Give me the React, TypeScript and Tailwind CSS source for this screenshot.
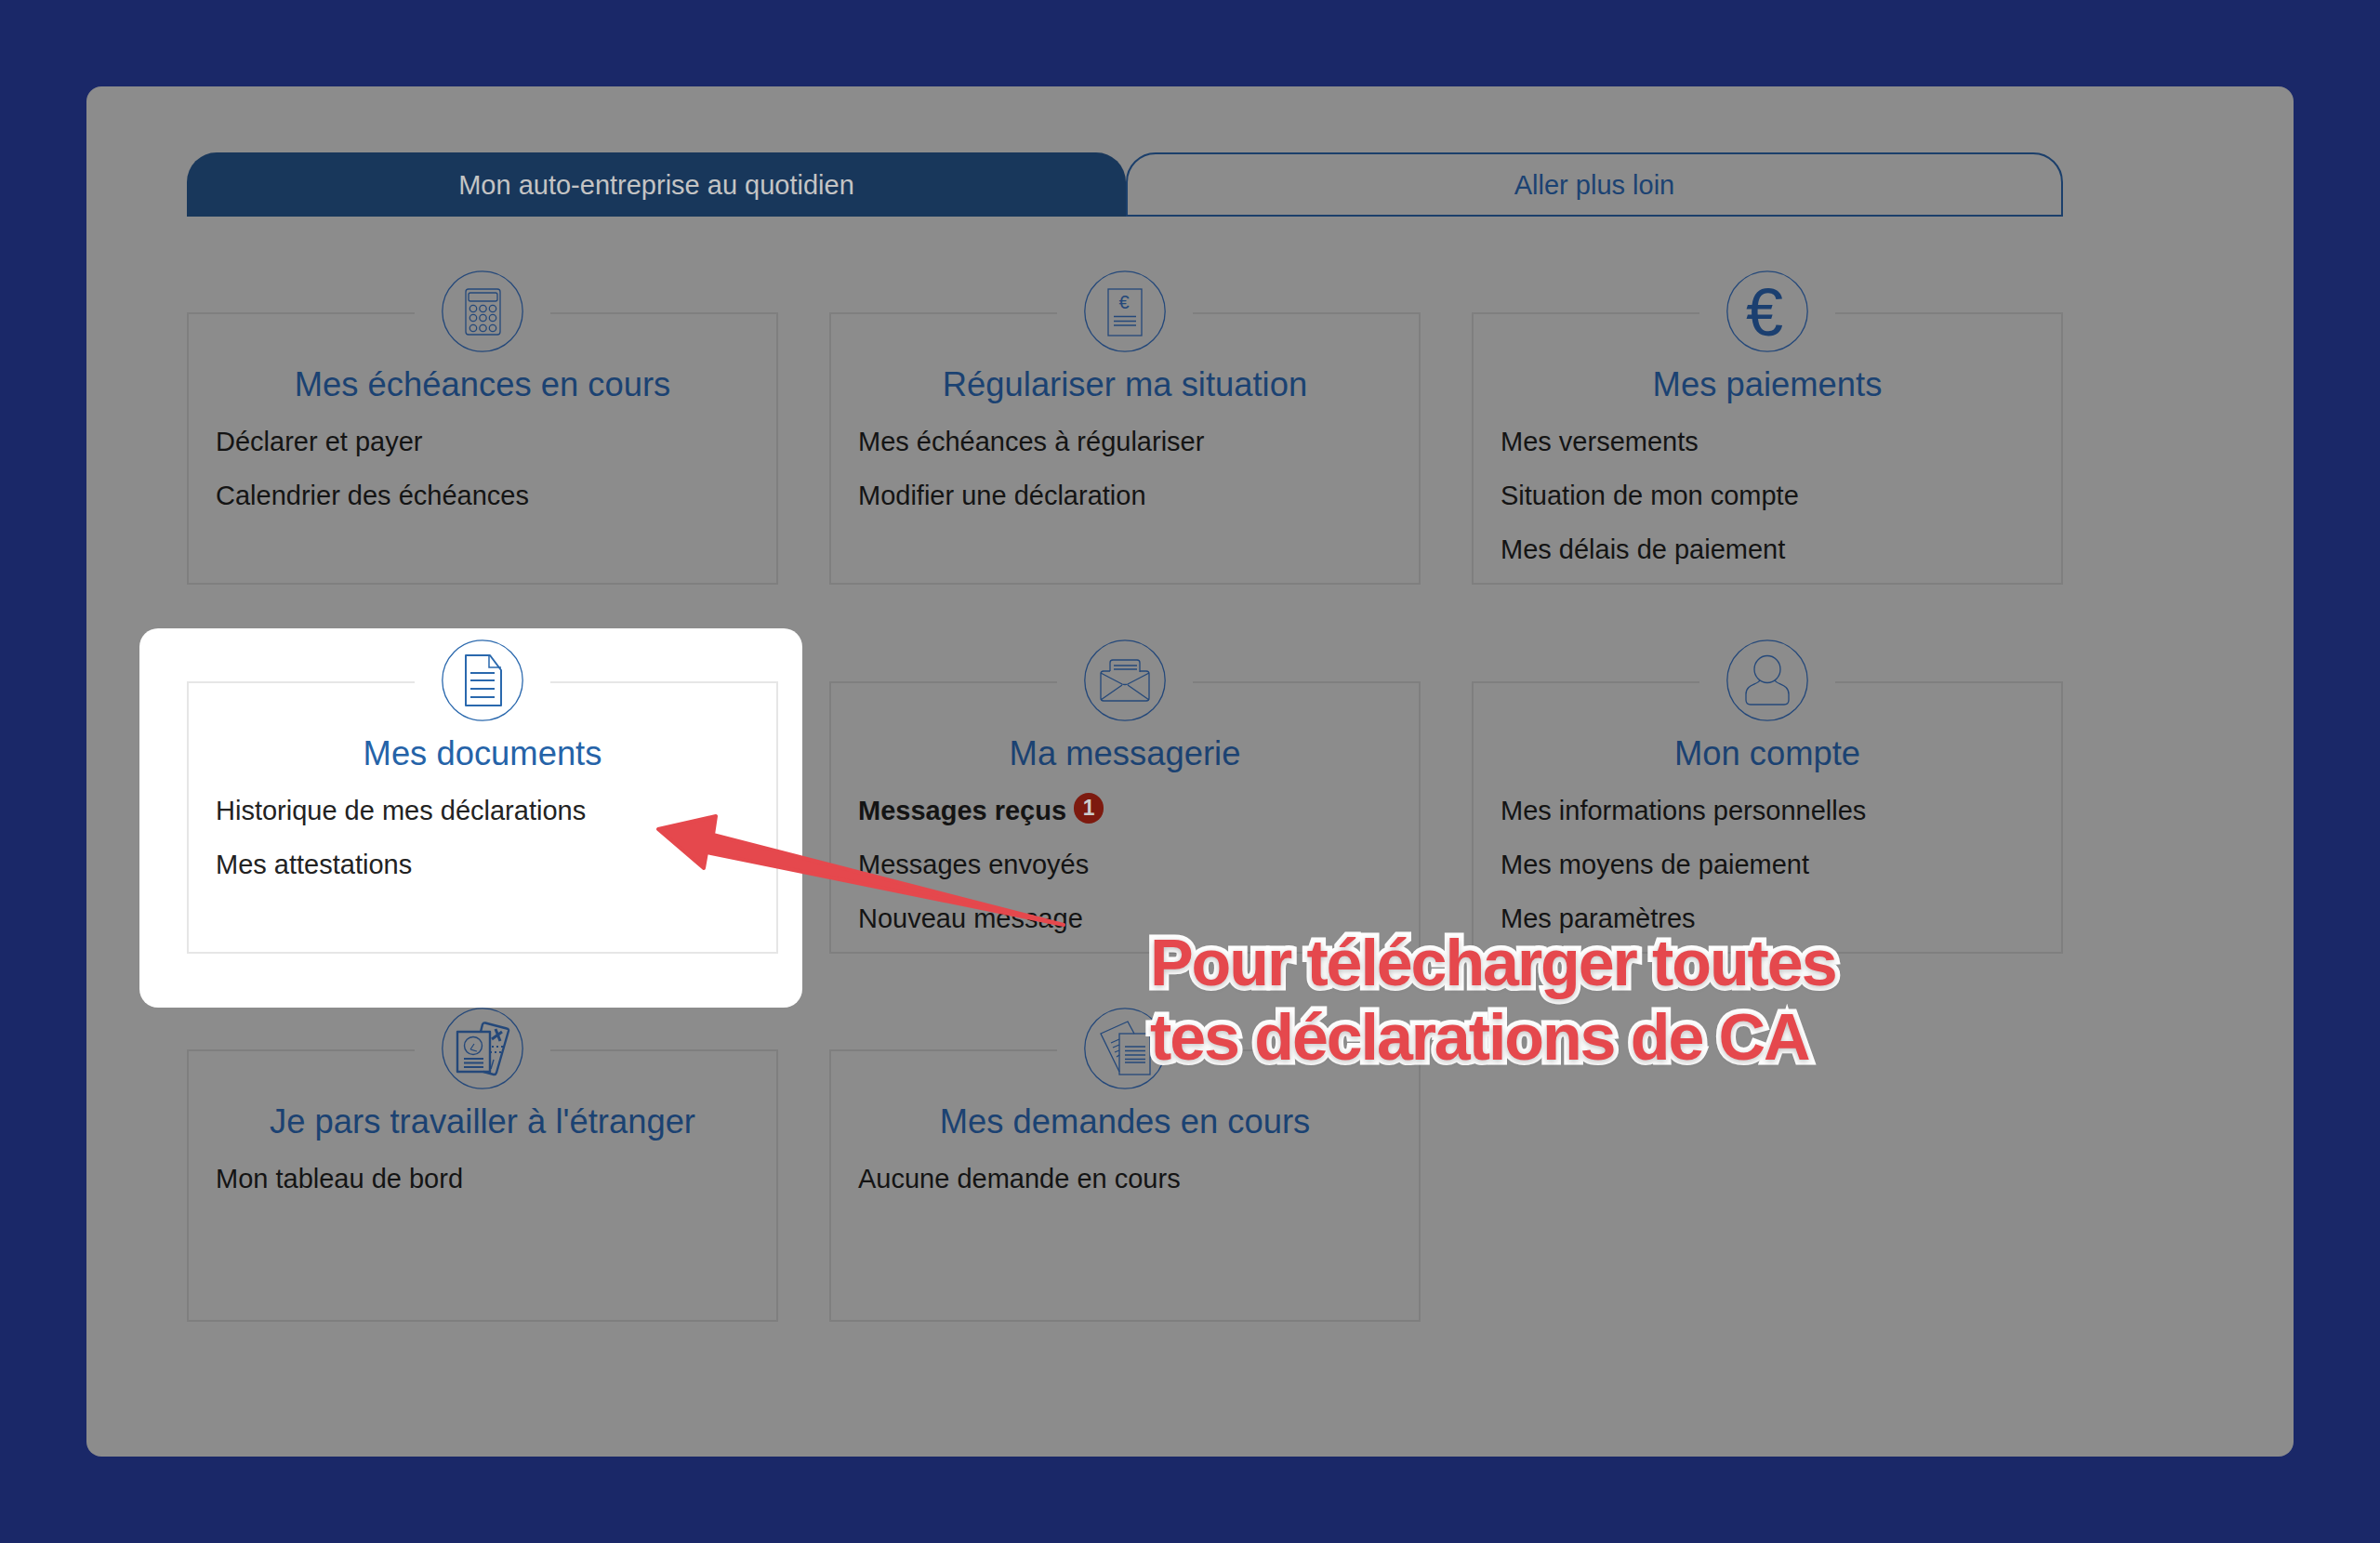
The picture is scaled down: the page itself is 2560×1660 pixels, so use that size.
import React from 'react';

interface LinkItem {
    label: string;
    bold?: boolean;
    badge?: string;
}

interface CardData {
    title: string;
    icon: React.ReactNode;
    links: LinkItem[];
    active?: boolean;
}

const CalculatorIcon = () => (
    <g fill="none">
        <rect x="-18" y="-24" width="37" height="49" rx="3" />
        <rect x="-15" y="-20" width="31" height="9" rx="2" />
        {[-10, 0.5, 11].map(x =>
            [-3, 7, 18].map(y => <circle key={`${x}-${y}`} cx={x} cy={y} r="3.7" />)
        )}
    </g>
);

const InvoiceIcon = () => (
    <g fill="none">
        <rect x="-18" y="-24" width="36" height="50" />
        <text x="-1" y="-3" fontSize="20" textAnchor="middle" fill="#24487a" stroke="none" fontFamily="'Liberation Sans', sans-serif">€</text>
        <path d="M-12 5.5H12M-12 10.5H12M-12 15H12" />
    </g>
);

const DocumentIcon = () => (
    <g fill="none" strokeWidth="2">
        <path d="M-18 -27H8L20 -11V27H-18Z" strokeLinejoin="round" />
        <path d="M7 -27V-14H20" strokeWidth="1.5" />
        <path d="M-13 -8H13M-13 0H13M-13 9H13M-13 18H13" />
    </g>
);

const EnvelopeIcon = () => (
    <g fill="none" strokeLinejoin="round">
        <path d="M-16 -10V-19Q-16 -22 -13 -22H13Q16 -22 16 -19V-9" />
        <path d="M-16 -10H-23Q-26 -10 -26 -7V19Q-26 22 -23 22H23Q26 22 26 19V-7Q26 -10 23 -10H16" />
        <path d="M-26 -8L-3 4Q0 5 3 4L26 -8M-26 21L-3 5M26 21L3 5" />
        <path d="M-12 -16H13M-12 -12H13" />
    </g>
);

const UserIcon = () => (
    <g fill="none">
        <ellipse cx="0" cy="-12" rx="14" ry="14.5" />
        <path d="M-8 0C-11 5 -23 4 -23 15V21Q-23 26 -18 26H18Q23 26 23 21V15C23 4 11 5 8 0" strokeLinejoin="round" />
    </g>
);

const PassportIcon = () => (
    <g fill="none" strokeWidth="2.4" strokeLinejoin="round">
        <path d="M-2 -18L0 -26Q1 -28 3 -27.5L26 -21.5Q28.5 -21 28 -19L15 26Q14 28.5 12 28L1 25" />
        <rect x="-27" y="-18" width="35" height="43" />
        <circle cx="-10" cy="-3" r="9.5" strokeWidth="1.4" />
        <path d="M-13 1L-9 -5M-13 1L-6 3" strokeWidth="1.2" />
        <path d="M-20 11H1M-20 15.5H1M-20 20H1" strokeWidth="1.8" />
        <path d="M10 -10L21 -18M14 -21L19 -8" strokeWidth="3" />
        <path d="M10 -2H22M8 4H20" strokeDasharray="2 3" strokeWidth="2" />
        <path d="M12 12L9 22" strokeWidth="1.4" />
    </g>
);

const PapersIcon = () => (
    <g fill="none" strokeWidth="1.3">
        <path d="M-6 25L-26 -16L3 -29L10 -16" />
        <rect x="-6" y="-16" width="33" height="44" />
        <path d="M-15 -6L-6 -10M-13 -1L-6 -4M-11 4L-6 2M-9 9L-6 7" />
        <path d="M0 -2H22M0 2.5H22M0 7H22M0 11.5H22M0 15H22" />
    </g>
);

const EuroIcon = () => (
    <text x="-3" y="26" fontSize="72" textAnchor="middle" fill="#1b3f70" stroke="none" fontFamily="'Liberation Sans', sans-serif">€</text>
);

const cards: CardData[] = [
    {
        title: 'Mes échéances en cours',
        icon: <CalculatorIcon />,
        links: [{ label: 'Déclarer et payer' }, { label: 'Calendrier des échéances' }],
    },
    {
        title: 'Régulariser ma situation',
        icon: <InvoiceIcon />,
        links: [{ label: 'Mes échéances à régulariser' }, { label: 'Modifier une déclaration' }],
    },
    {
        title: 'Mes paiements',
        icon: <EuroIcon />,
        links: [{ label: 'Mes versements' }, { label: 'Situation de mon compte' }, { label: 'Mes délais de paiement' }],
    },
    {
        title: 'Mes documents',
        icon: <DocumentIcon />,
        links: [{ label: 'Historique de mes déclarations' }, { label: 'Mes attestations' }],
        active: true,
    },
    {
        title: 'Ma messagerie',
        icon: <EnvelopeIcon />,
        links: [{ label: 'Messages reçus', bold: true, badge: '1' }, { label: 'Messages envoyés' }, { label: 'Nouveau message' }],
    },
    {
        title: 'Mon compte',
        icon: <UserIcon />,
        links: [{ label: 'Mes informations personnelles' }, { label: 'Mes moyens de paiement' }, { label: 'Mes paramètres' }],
    },
    {
        title: 'Je pars travailler à l\'étranger',
        icon: <PassportIcon />,
        links: [{ label: 'Mon tableau de bord' }],
    },
    {
        title: 'Mes demandes en cours',
        icon: <PapersIcon />,
        links: [{ label: 'Aucune demande en cours' }],
    },
];

const Card: React.FC<CardData> = ({ title, icon, links, active }) => (
    <div className={`relative ${active ? 'z-10' : ''}`}>
        {/* White spotlight behind the highlighted card */}
        {active && <div className="absolute -bottom-[58px] -left-[51px] -right-[26px] -top-[57px] rounded-[20px] bg-white" />}
        <div className={`relative h-[293px] border-2 ${active ? 'border-[#e6e6e6]' : 'border-[#7f7f7f]'}`}>
            <div className={`mx-auto -mt-[48px] flex w-[146px] justify-center ${active ? 'bg-white' : 'bg-[#8c8c8c]'}`}>
                <svg
                    viewBox="-45 -45 90 90"
                    className={`h-[90px] w-[90px] ${active ? 'stroke-[#2a68ad] text-[#2a68ad]' : 'stroke-[#24487a] text-[#24487a]'}`}
                    strokeWidth="1.3"
                >
                    <circle cx="0" cy="0" r="43.2" fill="none" />
                    {icon}
                </svg>
            </div>
            <h3 className={`mt-[12px] text-center text-[36.4px] leading-[44px] ${active ? 'text-[#2563a8]' : 'text-[#1b4272]'}`}>{title}</h3>
            <ul className="mt-[11px] pl-[29px]">
                {links.map(link => (
                    <li key={link.label} className={`flex h-[58px] items-center gap-[8px] text-[29px] ${active ? 'text-[#222222]' : 'text-[#141414]'} ${link.bold ? 'font-bold' : ''}`}>
                        {link.label}
                        {link.badge && (
                            <span className="mb-[6px] flex h-[33px] w-[32px] items-center justify-center rounded-full bg-[#7d1a0f] text-[23px] font-bold text-[#cccccc]">{link.badge}</span>
                        )}
                    </li>
                ))}
            </ul>
        </div>
    </div>
);

export default function App() {
    return (
        <div className="relative h-[1660px] w-[2560px] overflow-hidden bg-[#1a2868] p-[93px] font-['Liberation_Sans',Arial,sans-serif]">
            <div className="h-[1474px] w-[2374px] rounded-[16px] bg-[#8c8c8c] pl-[108px] pt-[71px]">
                {/* Tabs */}
                <div className="flex h-[69px] w-[2018px] text-[29px]">
                    <div className="flex w-[1010px] items-center justify-center rounded-t-[32px] bg-[#18375b] pt-[3px] text-[#c4c4c4]">Mon auto-entreprise au quotidien</div>
                    <div className="flex flex-1 items-center justify-center rounded-t-[32px] border-2 border-[#1b3f6b] pt-[3px] text-[#1b4272]">Aller plus loin</div>
                </div>

                {/* Cards */}
                <div className="mt-[103px] grid w-[2018px] grid-cols-[636px_636px_636px] gap-x-[55px] gap-y-[103.5px]">
                    {cards.map(card => (
                        <Card key={card.title} {...card} />
                    ))}
                </div>
            </div>

            {/* Annotation */}
            <svg viewBox="0 0 2560 1660" className="pointer-events-none absolute left-0 top-0 z-20 h-[1660px] w-[2560px]">
                <path
                    d="M708 892L770 878L767 898L1144 995L760 917L757 934Z"
                    fill="#e5484d"
                    stroke="#e5484d"
                    strokeWidth="4"
                    strokeLinejoin="round"
                />
            </svg>
            <div className="absolute left-[1237px] top-[996px] z-20 text-[70px] font-bold leading-[80px] tracking-[-2.1px] text-[#e5484d] [paint-order:stroke_fill] [-webkit-text-stroke:11px_white] [text-shadow:0_2px_6px_rgba(0,0,0,0.25)]">
                Pour télécharger toutes
                <br />
                tes déclarations de CA
            </div>
        </div>
    );
}
